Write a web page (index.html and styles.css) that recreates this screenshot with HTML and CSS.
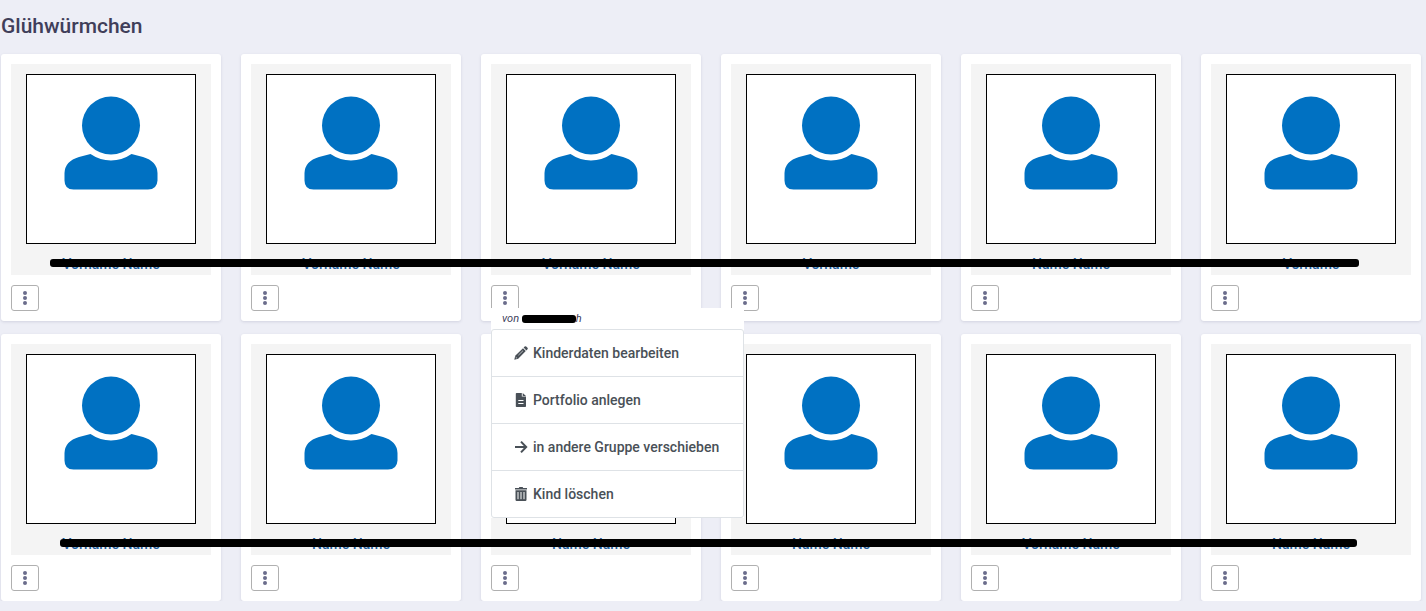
FILE: index.html
```
<!DOCTYPE html>
<html lang="de">
<head>
    <meta charset="UTF-8">
    <meta name="viewport" content="width=device-width, initial-scale=1.0">
    <title>Glühwürmchen</title>
    <link rel="stylesheet" href="styles.css">
</head>
<body>
    <svg class="icon-defs" aria-hidden="true">
        <symbol id="person" viewBox="0 0 168 168">
            <circle cx="84" cy="50.5" r="29"/>
            <path d="M63.5 79Q73 85.5 84 85.5T104.5 79L116 82Q130 86 130.5 98V105.5Q130 114.5 121 114.5H46.5Q37.5 114.5 37.5 105.5V98Q38 86 52 82Z"/>
        </symbol>
        <symbol id="dots" viewBox="0 0 4 14">
            <circle cx="2" cy="2" r="2"/>
            <circle cx="2" cy="7" r="2"/>
            <circle cx="2" cy="12" r="2"/>
        </symbol>
    </svg>

    <h1 class="group-title">Glühwürmchen</h1>

    <main>
        <section class="row">
            <div class="card">
                <a href="#" class="child">
                    <svg class="avatar"><use href="#person"/></svg>
                    <span class="name">Vorname Name</span>
                </a>
                <button type="button" class="more" aria-label="Menü"><svg><use href="#dots"/></svg></button>
            </div>
            <div class="card">
                <a href="#" class="child">
                    <svg class="avatar"><use href="#person"/></svg>
                    <span class="name">Vorname Name</span>
                </a>
                <button type="button" class="more" aria-label="Menü"><svg><use href="#dots"/></svg></button>
            </div>
            <div class="card">
                <a href="#" class="child">
                    <svg class="avatar"><use href="#person"/></svg>
                    <span class="name">Vorname Name</span>
                </a>
                <div class="dropdown">
                    <button type="button" class="more" aria-label="Menü"><svg><use href="#dots"/></svg></button>
                    <div class="menu">
                        <div class="menu-author">von <span class="author-mask"></span>h</div>
                        <ul class="menu-list">
                            <li><button type="button" class="menu-item">
                                <svg viewBox="0 0 14 14"><path d="M9.6 1.6 12.4 4.4 13.5 3.3Q14.2 2.6 13.5 1.8L12.2.5Q11.4-.2 10.7.5ZM9 2.2 1.2 9.8.3 13.7 4.2 12.8 11.8 5Z"/><path class="cut thin" d="M4.4 9.2 9 4.7M1.6 11 3 12.4"/></svg>
                                Kinderdaten bearbeiten
                            </button></li>
                            <li><button type="button" class="menu-item">
                                <svg viewBox="0 0 14 14"><path d="M2.6 0H7.8V3.6H12V13.2Q12 14 11.2 14H2.6Q1.8 14 1.8 13.2V.8Q1.8 0 2.6 0ZM8.7 0 12 2.9H8.7Z"/><path class="cut" d="M4.3 7.5H9.5M4.3 10.5H9.5"/></svg>
                                Portfolio anlegen
                            </button></li>
                            <li><button type="button" class="menu-item">
                                <svg viewBox="0 0 14 14"><path class="line" d="M1 7H12M7 1.6 12.2 7 7 12.4"/></svg>
                                in andere Gruppe verschieben
                            </button></li>
                            <li><button type="button" class="menu-item">
                                <svg viewBox="0 0 14 14"><path d="M1 1H4.8L5.4 0H8.6L9.2 1H13V2.5H1ZM1.5 3.2H12.5V12.8Q12.5 14 11.3 14H2.7Q1.5 14 1.5 12.8Z"/><path class="cut" d="M4 5V12.2M7 5V12.2M10 5V12.2"/></svg>
                                Kind löschen
                            </button></li>
                        </ul>
                    </div>
                </div>
            </div>
            <div class="card">
                <a href="#" class="child">
                    <svg class="avatar"><use href="#person"/></svg>
                    <span class="name">Vorname</span>
                </a>
                <button type="button" class="more" aria-label="Menü"><svg><use href="#dots"/></svg></button>
            </div>
            <div class="card">
                <a href="#" class="child">
                    <svg class="avatar"><use href="#person"/></svg>
                    <span class="name">Name Name</span>
                </a>
                <button type="button" class="more" aria-label="Menü"><svg><use href="#dots"/></svg></button>
            </div>
            <div class="card">
                <a href="#" class="child">
                    <svg class="avatar"><use href="#person"/></svg>
                    <span class="name">Vorname</span>
                </a>
                <button type="button" class="more" aria-label="Menü"><svg><use href="#dots"/></svg></button>
            </div>
            <div class="mask mask-first"></div>
        </section>

        <section class="row">
            <div class="card">
                <a href="#" class="child">
                    <svg class="avatar"><use href="#person"/></svg>
                    <span class="name">Vorname Name</span>
                </a>
                <button type="button" class="more" aria-label="Menü"><svg><use href="#dots"/></svg></button>
            </div>
            <div class="card">
                <a href="#" class="child">
                    <svg class="avatar"><use href="#person"/></svg>
                    <span class="name">Name Name</span>
                </a>
                <button type="button" class="more" aria-label="Menü"><svg><use href="#dots"/></svg></button>
            </div>
            <div class="card">
                <a href="#" class="child">
                    <svg class="avatar"><use href="#person"/></svg>
                    <span class="name">Name Name</span>
                </a>
                <button type="button" class="more" aria-label="Menü"><svg><use href="#dots"/></svg></button>
            </div>
            <div class="card">
                <a href="#" class="child">
                    <svg class="avatar"><use href="#person"/></svg>
                    <span class="name">Name Name</span>
                </a>
                <button type="button" class="more" aria-label="Menü"><svg><use href="#dots"/></svg></button>
            </div>
            <div class="card">
                <a href="#" class="child">
                    <svg class="avatar"><use href="#person"/></svg>
                    <span class="name">Vorname Name</span>
                </a>
                <button type="button" class="more" aria-label="Menü"><svg><use href="#dots"/></svg></button>
            </div>
            <div class="card">
                <a href="#" class="child">
                    <svg class="avatar"><use href="#person"/></svg>
                    <span class="name">Name Name</span>
                </a>
                <button type="button" class="more" aria-label="Menü"><svg><use href="#dots"/></svg></button>
            </div>
            <div class="mask mask-second"></div>
        </section>
    </main>
</body>
</html>
```
FILE: styles.css
```
* {
    box-sizing: border-box;
}

body {
    margin: 0;
    padding: 11px 5px 0 1px;
    font-family: Roboto, "Liberation Sans", sans-serif;
    font-size: 14px;
    color: #403e5a;
    background-color: #edeef6;
}

.icon-defs {
    display: none;
}

.group-title {
    margin: 0 0 13px;
    font-size: 21px;
    font-weight: 500;
    line-height: 30px;
}

.row {
    position: relative;
    display: grid;
    grid-template-columns: repeat(6, 1fr);
    column-gap: 20px;
    margin-bottom: 13px;
}

.row:last-child {
    margin-bottom: 0;
}

.card {
    padding: 10px;
    background-color: #fff;
    border-radius: 3px;
    box-shadow: 0 1px 3px rgba(60, 60, 110, 0.15);
}

/* picture and name */
.child {
    display: flex;
    flex-direction: column;
    align-items: center;
    margin-bottom: 10px;
    padding-top: 10px;
    background-color: #f4f4f4;
    text-decoration: none;
}

.avatar {
    width: 170px;
    height: 170px;
    border: 1px solid #000;
    background-color: #fff;
    fill: #0071c2;
}

.name {
    margin-top: 10px;
    font-size: 14px;
    font-weight: 500;
    line-height: 21px;
    color: #1f5f9f;
}

.more {
    display: flex;
    align-items: center;
    justify-content: center;
    width: 28px;
    height: 26px;
    padding: 0;
    border: 1px solid #b0b0b0;
    border-radius: 3px;
    background-color: #fff;
}

.more svg {
    width: 4px;
    height: 14px;
    fill: #6b6d8c;
}

/* black bars over the names */
.mask {
    position: absolute;
    top: 205px;
    height: 8px;
    border-radius: 3px;
    background-color: #000;
}

.mask-first {
    left: 49px;
    right: 62px;
}

.mask-second {
    left: 59px;
    right: 64px;
}

/* open menu */
.dropdown {
    position: relative;
}

.menu {
    position: absolute;
    top: 23px;
    left: 0;
    z-index: 10;
    background-color: #fff;
}

.menu-author {
    padding-left: 11px;
    font-size: 11px;
    font-style: italic;
    line-height: 21px;
}

.author-mask {
    display: inline-block;
    width: 54px;
    height: 8px;
    border-radius: 3px;
    background-color: #000;
    vertical-align: -1px;
}

.menu-list {
    margin: 0;
    padding: 0;
    list-style: none;
    border: 1px solid #dee2e6;
    border-radius: 3px;
}

.menu-list li + li {
    border-top: 1px solid #dee2e6;
}

.menu-item {
    display: flex;
    align-items: center;
    gap: 5px;
    width: 100%;
    height: 46px;
    padding: 0 24px 0 22px;
    border: 0;
    background: none;
    font: inherit;
    font-weight: 500;
    color: #495057;
    white-space: nowrap;
}

.menu-item svg {
    width: 14px;
    height: 14px;
    fill: #495057;
}

.menu-item .cut {
    fill: none;
    stroke: #fff;
}

.menu-item .thin {
    stroke-width: 0.6;
}

.menu-item .line {
    fill: none;
    stroke: #495057;
    stroke-width: 2;
}
```
